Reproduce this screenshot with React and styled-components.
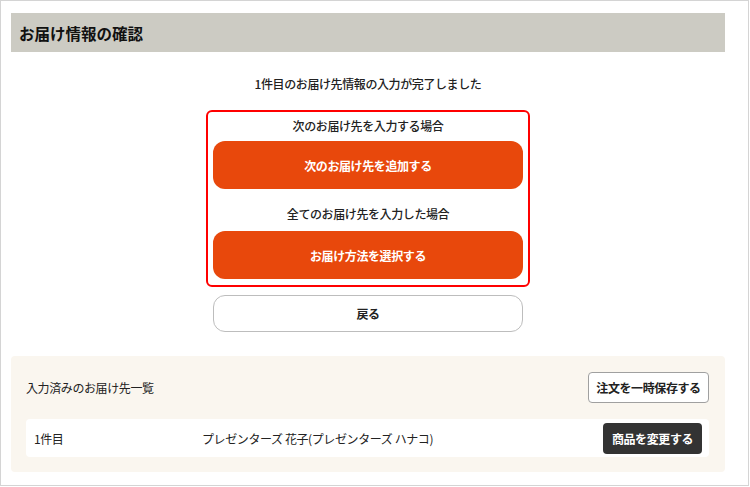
import React from 'react';
import styled, { createGlobalStyle } from 'styled-components';

const GlobalStyle = createGlobalStyle`
    html, body {
        margin: 0;
        padding: 0;
        background: #ffffff;
    }
    body {
        font-family: "Noto Sans CJK JP", "Noto Sans", sans-serif;
        color: #222222;
        letter-spacing: -0.025em;
    }
    * {
        box-sizing: border-box;
    }
`;

const Frame = styled.div`
    width: 749px;
    height: 486px;
    border: 1px solid #d4d4d4;
    padding: 12px 23px 0 10px;
    background: #ffffff;
    overflow: hidden;
`;

const PageTitle = styled.h1`
    margin: 0;
    height: 39px;
    padding-left: 8px;
    display: flex;
    align-items: center;
    background-color: #cccbc3;
    font-size: 15.5px;
    font-weight: 700;
    letter-spacing: 0;
    color: #111111;
`;

const Message = styled.p`
    margin: 22px 0 0;
    line-height: 20px;
    font-size: 12px;
    font-weight: 500;
    text-align: center;
`;

const ChoiceBox = styled.div`
    width: 324px;
    margin: 16px auto 0;
    padding: 4px 5px 6px;
    border: 2px solid #ff0000;
    border-radius: 6px;
    display: flex;
    flex-direction: column;
`;

const ChoiceLabel = styled.p`
    margin: ${(p) => (p.$first ? '0 0 5px' : '15px 0 7px')};
    line-height: 20px;
    font-size: 12px;
    font-weight: 500;
    text-align: center;
`;

const PrimaryButton = styled.button`
    width: 310px;
    height: 48px;
    border: none;
    border-radius: 12px;
    background-color: #e8480c;
    color: #ffffff;
    font-family: inherit;
    letter-spacing: inherit;
    font-size: 12px;
    font-weight: 700;
    cursor: pointer;
`;

const BackButton = styled.button`
    display: block;
    width: 310px;
    height: 37px;
    margin: 8px auto 0;
    border: 1px solid #bdbdbd;
    border-radius: 12px;
    background: #ffffff;
    color: #222222;
    font-family: inherit;
    letter-spacing: inherit;
    font-size: 12px;
    font-weight: 700;
    cursor: pointer;
`;

const ListPanel = styled.section`
    margin-top: 24px;
    height: 116px;
    padding: 16px 16px 15px 15px;
    background-color: #faf6ef;
    border-radius: 4px;
    display: flex;
    flex-direction: column;
    gap: 16px;
`;

const PanelHead = styled.div`
    display: flex;
    align-items: center;
    justify-content: space-between;
`;

const PanelTitle = styled.span`
    font-size: 12px;
`;

const SaveButton = styled.button`
    height: 31px;
    width: 121px;
    padding: 0;
    white-space: nowrap;
    border: 1px solid #a0a0a0;
    border-radius: 4px;
    background: #ffffff;
    color: #222222;
    font-family: inherit;
    letter-spacing: inherit;
    font-size: 12px;
    font-weight: 700;
    cursor: pointer;
`;

const AddressRow = styled.div`
    height: 38px;
    padding: 0 7px 0 8px;
    background: #ffffff;
    border-radius: 4px;
    display: grid;
    grid-template-columns: 168px 1fr auto;
    align-items: center;
    font-size: 12px;
`;

const DarkButton = styled.button`
    width: 99px;
    height: 31px;
    padding: 0;
    white-space: nowrap;
    border: none;
    border-radius: 4px;
    background-color: #333333;
    color: #ffffff;
    font-family: inherit;
    letter-spacing: inherit;
    font-size: 12px;
    font-weight: 700;
    cursor: pointer;
`;

const App = () => {
    return (
        <>
            <GlobalStyle />
            <Frame>
                <PageTitle>お届け情報の確認</PageTitle>
                <Message>1件目のお届け先情報の入力が完了しました</Message>
                <ChoiceBox>
                    <ChoiceLabel $first>次のお届け先を入力する場合</ChoiceLabel>
                    <PrimaryButton>次のお届け先を追加する</PrimaryButton>
                    <ChoiceLabel>全てのお届け先を入力した場合</ChoiceLabel>
                    <PrimaryButton>お届け方法を選択する</PrimaryButton>
                </ChoiceBox>
                <BackButton>戻る</BackButton>
                <ListPanel>
                    <PanelHead>
                        <PanelTitle>入力済みのお届け先一覧</PanelTitle>
                        <SaveButton>注文を一時保存する</SaveButton>
                    </PanelHead>
                    <AddressRow>
                        <span>1件目</span>
                        <span>プレゼンターズ 花子(プレゼンターズ ハナコ)</span>
                        <DarkButton>商品を変更する</DarkButton>
                    </AddressRow>
                </ListPanel>
            </Frame>
        </>
    );
};

export default App;
